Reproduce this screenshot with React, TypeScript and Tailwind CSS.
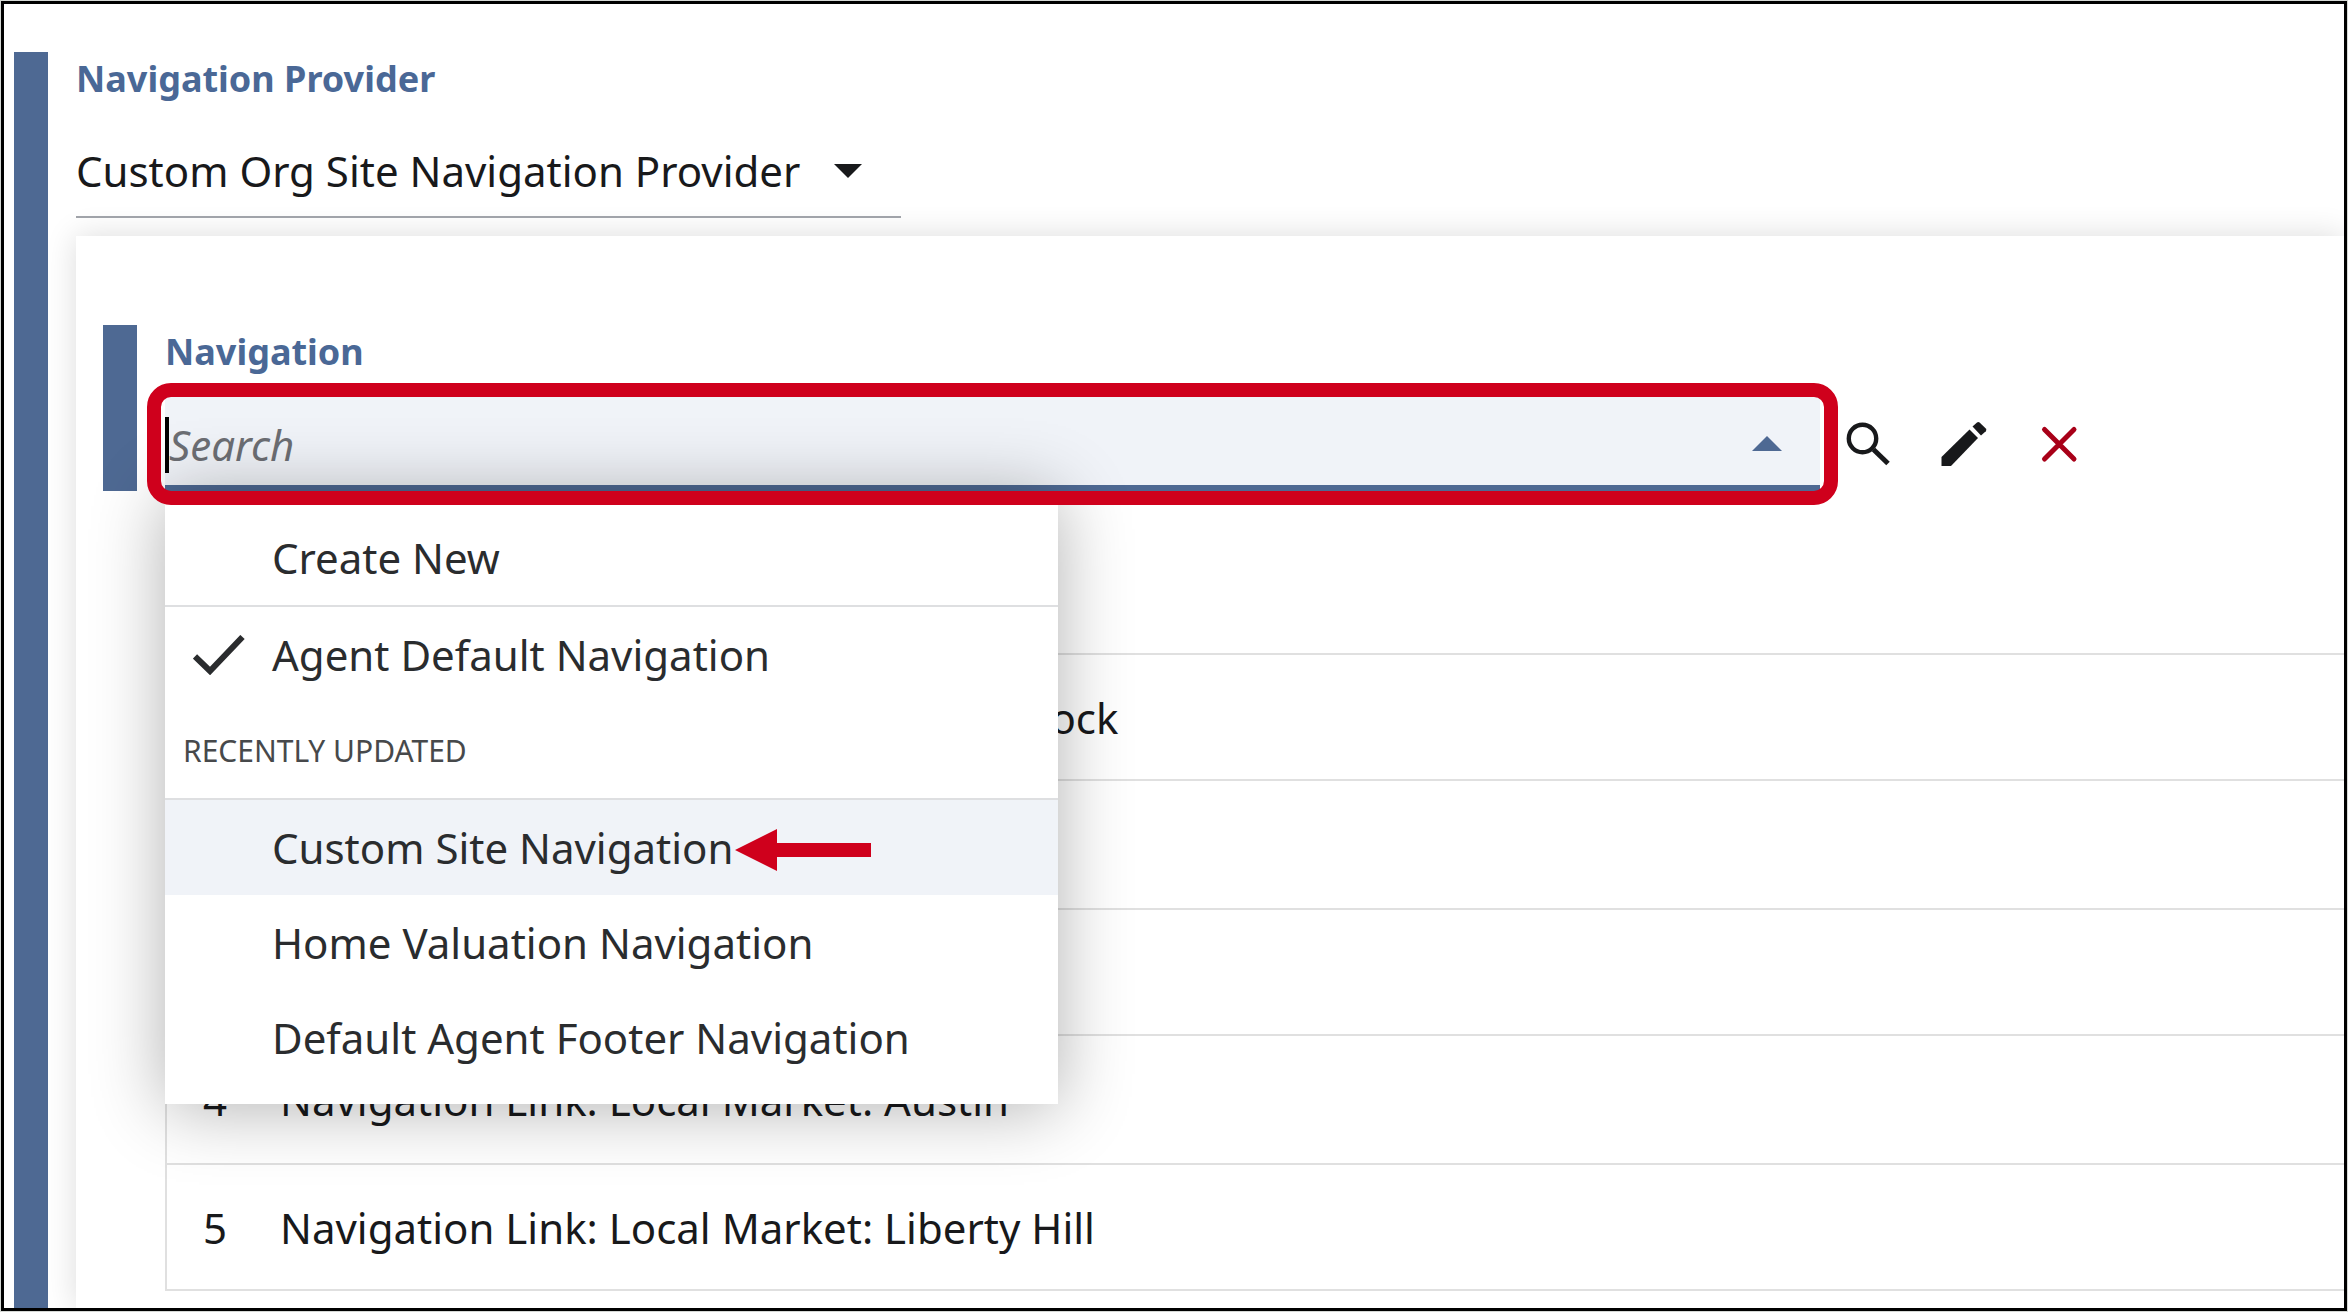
import { ReactNode, useState } from 'react';

const providers = ['Custom Org Site Navigation Provider'];

const recentlyUpdated = [
	'Custom Site Navigation',
	'Home Valuation Navigation',
	'Default Agent Footer Navigation',
];

const links = [
	'Navigation Link: Local Market: Round Rock',
	'',
	'',
	'Navigation Link: Local Market: Austin',
	'Navigation Link: Local Market: Liberty Hill',
];

const SearchIcon = () => (
	<svg viewBox="0 0 60 60" className="size-[60px]" fill="none" stroke="currentColor">
		<circle cx="24.5" cy="24.5" r="13.7" strokeWidth="4.4" />
		<path d="M35.5 35.5 L50 49.5" strokeWidth="5" />
	</svg>
);

const EditIcon = () => (
	<svg viewBox="0 0 60 60" className="size-[60px]" fill="currentColor">
		<path d="M7.5 43 L35.5 15.5 L44 24 L17 52 H7.5 Z" />
		<path d="M38.5 12.5 L43 8.4 Q44.3 7.4 45.6 8.4 L51.8 14.6 Q53 16 51.8 17.2 L47 21.4 Z" />
	</svg>
);

const ClearIcon = () => (
	<svg viewBox="0 0 60 60" className="size-[60px]" fill="none" stroke="currentColor" strokeWidth="5">
		<path d="M14.5 15.5 L44 45 M44 15.5 L14.5 45" strokeLinecap="round" />
	</svg>
);

const CheckIcon = () => (
	<svg viewBox="0 0 52 40" className="h-10 w-[52px]" fill="none" stroke="currentColor" strokeWidth="6">
		<path d="M2 21.5 L17 36 L49.5 2" />
	</svg>
);

// Red callout arrow that points at the option to pick
const CalloutArrow = () => (
	<svg viewBox="0 0 136 46" className="ml-0.5 h-[46px] w-[136px] fill-[#cf001c]" aria-hidden="true">
		<path d="M0 25 L42 4 V18 H136 V32 H42 V46 Z" />
	</svg>
);

interface MenuOptionProps {
	label: string;
	checked?: boolean;
	active?: boolean;
	children?: ReactNode;
}

const MenuOption = ({ label, checked, active, children }: MenuOptionProps) => (
	<button
		type="button"
		role="option"
		aria-selected={!!checked}
		className={`flex h-[95px] w-full items-center text-left ${active ? 'bg-[#f0f3f8]' : ''}`}
	>
		<span className="flex w-[107px] shrink-0 pl-7">{checked && <CheckIcon />}</span>
		<span className="whitespace-nowrap">{label}</span>
		{children}
	</button>
);

const NavigationMenu = () => (
	<div
		role="listbox"
		aria-label="Navigation"
		className="absolute left-0 top-full z-10 w-[893px] bg-white pb-[19px] pt-[19px] text-[#2a2c2e] shadow-[0_4px_68px_rgba(0,0,0,0.31)]"
	>
		<MenuOption label="Create New" />
		<div className="border-t-2 border-[#dedfe1]">
			<MenuOption label="Agent Default Navigation" checked />
		</div>
		<p className="flex h-24 items-center pl-[18px] text-[30px] text-[#47494b]">RECENTLY UPDATED</p>
		<div className="border-t-2 border-[#dedfe1]">
			{recentlyUpdated.map((label, i) => (
				<MenuOption key={label} label={label} active={i === 0}>
					{i === 0 && <CalloutArrow />}
				</MenuOption>
			))}
		</div>
	</div>
);

const LinksTable = () => (
	<table className="mt-[162px] w-full border-separate border-spacing-0 border-b-2 border-l-2 border-[#e0e0e0]">
		<tbody>
			{links.map((link, i) => (
				<tr key={i} className="odd:h-[126px] even:h-[129px]">
					<td className="w-[113px] border-t-2 border-[#e0e0e0] p-0 pl-9">{i + 1}</td>
					<td className="border-t-2 border-[#e0e0e0] p-0">{link}</td>
				</tr>
			))}
		</tbody>
	</table>
);

const NavigationField = () => {
	const [query, setQuery] = useState('');

	return (
		<div className="flex">
			<div className="w-[34px] shrink-0 bg-[#4e6993]" />
			<div className="min-w-0 flex-1 pl-7">
				<label
					htmlFor="navigation"
					className="block text-[36px] font-bold leading-[54px] text-[#4a6896]"
				>
					Navigation
				</label>
				<div className="mt-[18px] flex items-center pr-[236px]">
					<div className="relative min-w-0 flex-1">
						<input
							id="navigation"
							type="text"
							value={query}
							onChange={(e) => setQuery(e.target.value)}
							placeholder="Search"
							className="block h-[94px] w-full border-b-[6px] border-[#4e6993] bg-[#f0f3f8] pl-1 pr-20 pt-1.5 outline-none placeholder:italic placeholder:text-[#6c6e73]"
						/>
						<span className="absolute left-0 top-5 h-14 w-1 bg-black" />
						<svg viewBox="0 0 30 15" className="absolute right-[38px] top-[39px] h-[15px] w-[30px] fill-[#4e6993]">
							<path d="M0 15 L15 0 L30 15 Z" />
						</svg>
						<NavigationMenu />
						<div className="pointer-events-none absolute -inset-x-[18px] -inset-y-3.5 z-20 rounded-[24px] border-[14px] border-[#cf001c]" />
					</div>
					<button type="button" aria-label="Search" className="flex w-24 justify-center text-[#18191b]">
						<SearchIcon />
					</button>
					<button type="button" aria-label="Edit" className="flex w-24 justify-center text-[#18191b]">
						<EditIcon />
					</button>
					<button type="button" aria-label="Clear" className="flex w-24 justify-center text-[#a80018]">
						<ClearIcon />
					</button>
				</div>
			</div>
		</div>
	);
};

export default function App() {
	return (
		<div className="flex min-h-screen bg-[#d5d8d5] p-px font-['Noto_Sans',sans-serif] text-[42px] text-[#18191b]">
			<main className="flex min-w-0 flex-1 overflow-hidden border-[3px] border-black bg-white pl-2.5 pt-12">
				<div className="w-[34px] shrink-0 bg-[#4e6993]" />
				<div className="flex min-w-0 flex-1 flex-col pl-7">
					<label
						htmlFor="provider"
						className="text-[36px] font-bold leading-[54px] text-[#4a6896]"
					>
						Navigation Provider
					</label>
					<div className="relative mt-[18px] w-[825px]">
						<select
							id="provider"
							className="h-[94px] w-full appearance-none border-b-2 border-[#a0a3a9] outline-none"
						>
							{providers.map((name) => (
								<option key={name}>{name}</option>
							))}
						</select>
						<svg
							viewBox="0 0 28 14"
							className="pointer-events-none absolute right-[39px] top-10 h-3.5 w-7 fill-[#18191b]"
						>
							<path d="M0 0 H28 L14 14 Z" />
						</svg>
					</div>
					<section className="mt-[18px] flex-1 bg-white pb-[17px] pl-[27px] pt-[89px] shadow-[0_0_30px_rgba(0,0,0,0.14)]">
						<NavigationField />
						<div className="pl-[62px]">
							<LinksTable />
						</div>
					</section>
				</div>
			</main>
		</div>
	);
}
